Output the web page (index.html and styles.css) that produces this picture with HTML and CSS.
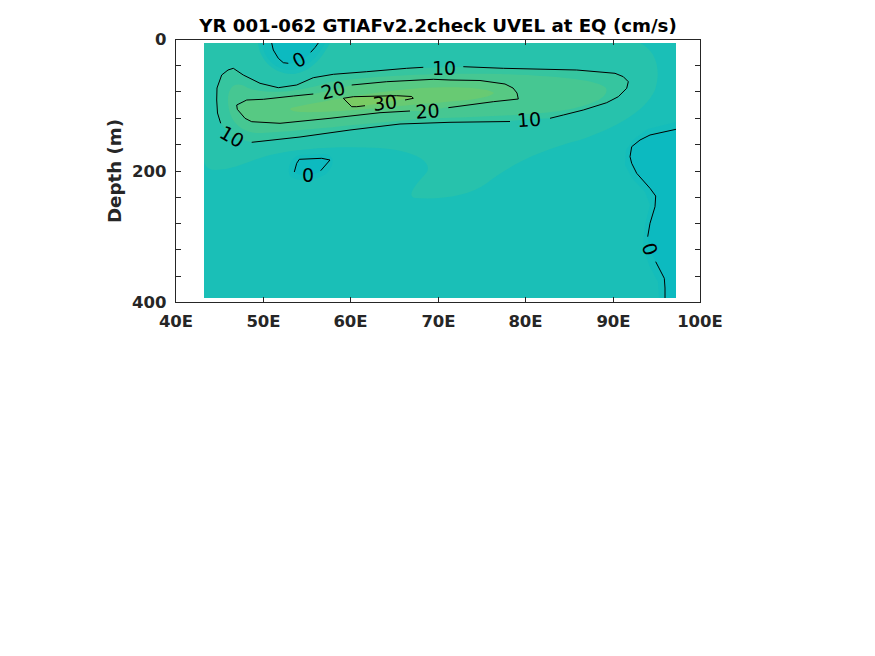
FILE: index.html
```html
<!DOCTYPE html>
<html>
<head>
<meta charset="utf-8">
<title>UVEL at EQ</title>
<link rel="stylesheet" href="styles.css">
</head>
<body>
<div class="figure">
<svg class="plot" width="875" height="656" viewBox="0 0 875 656">
  <defs>
    <clipPath id="data">
      <rect x="204" y="43" width="472" height="255"/>
    </clipPath>
  </defs>

  <g clip-path="url(#data)">
    <rect class="f-base" x="204" y="43" width="472" height="255"/>
    <!-- 5-10 -->
    <path class="f-a" d="M204,43 L258,43 C260,62 276,74 292,74 C310,73 322,58 330,43 L640,43 C655,50 662,68 655,90 C645,112 615,128 580,140 C540,150 510,165 487,183 C470,196 440,200 415,198 C405,196 418,182 427,172 C433,160 410,150 380,148 C340,146 300,148 270,155 C250,160 235,170 215,170 C208,170 204,165 204,160 Z"/>
    <!-- negative regions -->
    <path class="f-n1" d="M262,43 C264,60 277,70 291,70 C306,69 318,57 325,43 Z"/>
    <path class="f-n2" d="M271.7,43 L273.3,50 L278.3,58.3 L283.3,62.7 L290,63.5 C300,63 308,56 311,52 L315,47.5 L318.3,43 Z"/>
    <path class="f-n1" d="M290,176 C286,168 292,156 300,155 L325,154 C336,156 334,166 326,174 C316,181 296,182 290,176 Z"/>
    <path class="f-n2" d="M294.3,172 L296.7,163.3 L299.3,159.3 L321.7,158.3 L330,160 L320.7,170.7 C315,176 300,177 294.3,172 Z"/>
    <path class="f-n1" d="M676,122 L648,129 L634,139 L626,150 L625,165 L632,178 L645,192 L650,205 L645,225 L643,245 L649,265 L658,282 L659,298 L676,298 Z"/>
    <path class="f-n2" d="M676,129.3 L650,135 L640,140 L631.7,146.7 L630,156.7 L631.7,163.3 L636.7,173.3 L650,188.3 L655.7,196 L655,206.7 L650,223.3 L647.7,236.7 L650,250 L655.7,261.7 L660,270 L664.3,278.3 L665,288 L665,298 L676,298 Z"/>
    <!-- 10-15 -->
    <path class="f-b" d="M251.7,142.3 L231,137 L220.7,123.3 L217.5,113 L216.7,100 L217,88 L221.7,75 L228,70 L233.3,68.3 L243.3,75 L260,83.3 L278.3,87.7 L296.7,85 L313.3,77.7 L333.3,74.3 L366.7,71.7 L406.7,68.3 L444,67.3 L463.3,66.7 L503.3,68.3 L576.7,70 L615,73.3 L623.3,76.7 L628.3,81.7 L626.7,88.3 L618.3,96.7 L606.7,102.7 L583.3,110 L563.3,115 L550,118.3 L529,119.3 L510,121 L450,122.3 L400,124 L350,130 L300,137 Z"/>
    <!-- 15-20 -->
    <path class="f-c" d="M228,100 C228,86 236,80 248,88 C268,95 300,92 330,82 C380,75 440,73 500,74 C560,76 598,80 606,88 C610,98 590,106 560,111 C520,116 470,117 420,119 C360,124 300,131 262,133 C238,134 228,118 228,100 Z"/>
    <!-- 20-25 -->
    <path class="f-d" d="M237,107 L246.7,100 L263.3,99.3 L293.3,96 L313.3,94 L333,90 L351.7,85 L386.7,81.7 L433.3,79.3 L450,80 L480,80.5 L505,84 L513,88 L517,93 L518.3,99 L493.3,101.7 L450,106.7 L427,111 L410,111 L380,112.7 L330,118.3 L280,123.3 L251.7,121.7 L245,118.3 L237.3,109.3 Z"/>
    <!-- 25-30 -->
    <path class="f-e" d="M295,107 C330,100 370,92 420,88 C460,86 488,88 494,93 C489,99 460,101 420,104 C380,108 330,113 300,112 C288,111 288,108 295,107 Z"/>
    <!-- >30 -->
    <path class="f-f" d="M343.3,99 L353.3,106.7 L363.3,106 L385,102.3 L405,99 L413.3,98.3 L411.7,96.7 L396.7,95.7 L353.3,96.7 Z"/>

    <!-- contour lines -->
    <g class="cline">
      <polyline points="220.7,123.3 217.5,113 216.7,100 217,88 221.7,75 228,70 233.3,68.3 243.3,75 260,83.3 278.3,87.7 296.7,85 313.3,77.7 333.3,74.3 366.7,71.7 406.7,68.3 423.3,67.3"/>
      <polyline points="463.3,66.7 503.3,68.3 576.7,70 615,73.3 623.3,76.7 628.3,81.7 626.7,88.3 618.3,96.7 606.7,102.7 583.3,110 563.3,115 550,118.3"/>
      <polyline points="510,121.5 450,122.3 400,124 350,130 300,137 251.7,142.3"/>

      <polyline points="313.3,94 293.3,96 263.3,99.3 246.7,100 236.7,105 237.3,109.3 245,118.3 251.7,121.7 280,123.3 330,118.3 380,112.7 410,111"/>
      <polyline points="448.3,107.7 493.3,101.7 518.3,99 517,93 513,88 505,84 480,80.5 450,80 433.3,79.3 386.7,81.7 351.7,85"/>

      <polyline points="365,105.7 356.7,106.7 351.7,106.7 343.3,98.3 353.3,96.7 396.7,95.7 411.7,96.5 413.3,98.3 405,100"/>

      <polyline points="271.7,43 273.3,50 278.3,58.3 283.3,62.7 288.3,63.3"/>
      <polyline points="310.7,52.3 315,47.5 318.3,43"/>

      <polyline points="294.3,172 296.7,163.3 299.3,159.3 321.7,158.3 330,160 320.7,170.7"/>

      <polyline points="676,129.3 650,135 640,140 631.7,146.7 630,156.7 631.7,163.3 636.7,173.3 650,188.3 655.7,196 655,206.7 650,223.3 647.7,236.7"/>
      <polyline points="655.7,261.7 660,270 664.3,278.3 665,288 665,298"/>
    </g>
  </g>

  <!-- contour labels -->
  <text class="clabel" transform="translate(444,67.5)">10</text>
  <text class="clabel" transform="translate(529,119.5) rotate(-4)">10</text>
  <text class="clabel" transform="translate(232,136.5) rotate(30)">10</text>
  <text class="clabel" transform="translate(333,90) rotate(-14)">20</text>
  <text class="clabel" transform="translate(427.5,111) rotate(-4)">20</text>
  <text class="clabel" transform="translate(385,102.5) rotate(-7)">30</text>
  <text class="clabel" transform="translate(299,59.5) rotate(-27)">0</text>
  <text class="clabel" transform="translate(308,175)">0</text>
  <text class="clabel" transform="translate(650,249) rotate(72)">0</text>

  <!-- axes box and ticks -->
  <g class="axis">
    <rect x="175.5" y="39.5" width="525" height="263"/>
    <path d="M263.5,302 v-5 M350.5,302 v-5 M438.5,302 v-5 M525.5,302 v-5 M613.5,302 v-5
             M263.5,40 v5 M350.5,40 v5 M438.5,40 v5 M525.5,40 v5 M613.5,40 v5
             M176,65.5 h5 M176,91.5 h5 M176,118.5 h5 M176,144.5 h5 M176,171.5 h5 M176,197.5 h5 M176,223.5 h5 M176,249.5 h5 M176,276.5 h5
             M700,65.5 h-5 M700,91.5 h-5 M700,118.5 h-5 M700,144.5 h-5 M700,171.5 h-5 M700,197.5 h-5 M700,223.5 h-5 M700,249.5 h-5 M700,276.5 h-5"/>
  </g>

  <!-- tick labels -->
  <g class="xtick">
    <text x="176" y="327">40E</text>
    <text x="263.5" y="327">50E</text>
    <text x="350.5" y="327">60E</text>
    <text x="438.5" y="327">70E</text>
    <text x="525.5" y="327">80E</text>
    <text x="613.5" y="327">90E</text>
    <text x="700" y="327">100E</text>
  </g>
  <g class="ytick">
    <text x="166.5" y="45">0</text>
    <text x="166.5" y="177">200</text>
    <text x="166.5" y="308">400</text>
  </g>
  <text class="ylabel" transform="translate(121,171) rotate(-90)">Depth (m)</text>
  <text class="title" x="438" y="31.5">YR 001-062 GTIAFv2.2check UVEL at EQ (cm/s)</text>
</svg>
</div>
</body>
</html>
```
FILE: styles.css
```css
html, body {
  margin: 0;
  padding: 0;
  background: #ffffff;
}

.figure {
  width: 875px;
  height: 656px;
  background: #ffffff;
  overflow: hidden;
}

.plot {
  display: block;
}

.f-base { fill: #1abfb7; }
.f-a { fill: #27c2ac; }
.f-n1 { fill: #14bdbb; }
.f-n2 { fill: #0cbac0; }
.f-b { fill: #36c59f; }
.f-c { fill: #46c792; }
.f-d { fill: #57c983; }
.f-e { fill: #68ca73; }
.f-f { fill: #7acb63; }

.cline polyline {
  fill: none;
  stroke: #000000;
  stroke-width: 1;
  stroke-linejoin: round;
}

.clabel {
  font-family: "DejaVu Sans", "Liberation Sans", sans-serif;
  font-size: 19px;
  fill: #000000;
  text-anchor: middle;
  dominant-baseline: central;
}

.axis rect,
.axis path {
  fill: none;
  stroke: #262626;
  stroke-width: 1;
}

.xtick text,
.ytick text {
  font-family: "DejaVu Sans", "Liberation Sans", sans-serif;
  font-weight: bold;
  font-size: 16.5px;
  fill: #262626;
}

.xtick text { text-anchor: middle; }
.ytick text { text-anchor: end; }

.ylabel {
  font-family: "DejaVu Sans", "Liberation Sans", sans-serif;
  font-weight: bold;
  font-size: 18.2px;
  fill: #262626;
  text-anchor: middle;
}

.title {
  font-family: "DejaVu Sans", "Liberation Sans", sans-serif;
  font-weight: bold;
  font-size: 18.2px;
  fill: #000000;
  text-anchor: middle;
}
```
